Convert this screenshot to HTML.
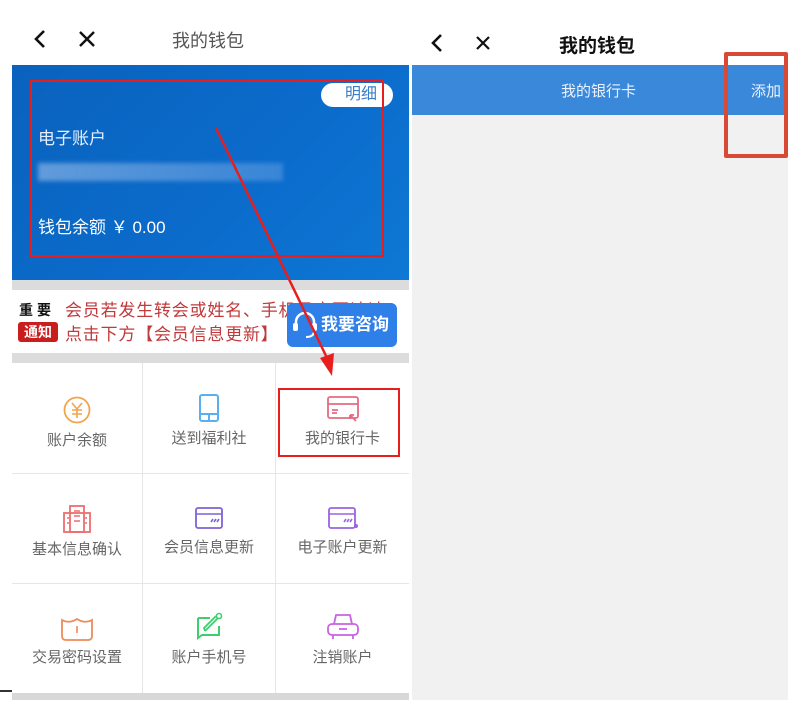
<!DOCTYPE html>
<html><head><meta charset="utf-8"><style>
*{margin:0;padding:0;box-sizing:border-box}
body{width:800px;height:711px;background:#fff;position:relative;overflow:hidden;font-family:"Liberation Sans","Noto Sans CJK SC",sans-serif}
.a{position:absolute}
.cell{position:absolute;background:#fff;text-align:center;color:#666;font-size:15px}
.cell svg{display:block;margin:0 auto 4px}
</style></head><body>
<svg class="a" style="left:30px;top:28px" width="80" height="22"><path d="M14 3 L6 11 L14 19" stroke="#111" stroke-width="2.6" fill="none"/><path d="M50 4 L64 18 M64 4 L50 18" stroke="#111" stroke-width="2.4"/></svg>
<div class="a" style="left:172px;top:27px;font-size:18px;color:#555">我的钱包</div>
<div class="a" style="left:12px;top:65px;width:397px;height:215px;background:linear-gradient(135deg,#0a62bd,#0b6ccc 60%,#0e78d4)"></div>
<div class="a" style="left:321px;top:83px;width:72px;height:24px;background:#fff;border-radius:12px;color:#3a7fc8;font-size:16px;text-align:right;padding-right:16px;line-height:24px">明细</div>
<div class="a" style="left:38px;top:124px;color:#e4efff;font-size:17px">电子账户</div>
<div class="a" style="left:38px;top:163px;width:245px;height:18px;background:linear-gradient(90deg,rgba(170,200,240,.55),rgba(140,180,235,.35));filter:blur(2px)"></div>
<div class="a" style="left:38px;top:213px;color:#fff;font-size:17px">钱包余额 ￥ 0.00</div>
<div class="a" style="left:30px;top:80px;width:354px;height:177px;border:2px solid #e81e1e"></div>
<div class="a" style="left:12px;top:280px;width:397px;height:10px;background:#dcdcdc"></div>
<div class="a" style="left:12px;top:353px;width:397px;height:10px;background:#dcdcdc"></div>
<div class="a" style="left:19px;top:300px;font-size:14px;font-weight:bold;color:#111;letter-spacing:4px">重要</div>
<div class="a" style="left:18px;top:322px;width:40px;height:20px;background:#c81e1e;border-radius:3px;color:#fff;font-size:14px;font-weight:bold;text-align:center;line-height:20px">通知</div>
<div class="a" style="left:65px;top:296px;font-size:17px;letter-spacing:0.8px;color:#c0393b;white-space:nowrap;width:340px;overflow:hidden">会员若发生转会或姓名、手机号变更请请</div>
<div class="a" style="left:65px;top:320px;font-size:17px;letter-spacing:0.8px;color:#c0393b">点击下方【会员信息更新】</div>
<div class="a" style="left:287px;top:303px;width:110px;height:44px;background:#2f7fe8;border-radius:6px;color:#fff;font-size:17px;font-weight:bold;line-height:44px;padding-left:34px">我要咨询</div>
<svg class="a" style="left:290px;top:309px" width="30" height="32"><path d="M6 18 V13 a9 9 0 0 1 18 0 V18" stroke="#fff" stroke-width="2.5" fill="none"/><rect x="3" y="14" width="5" height="8" rx="2" fill="#fff"/><rect x="22" y="14" width="5" height="8" rx="2" fill="#fff"/><path d="M24 22 q0 6 -8 6" stroke="#fff" stroke-width="2" fill="none"/></svg>
<div class="a" style="left:12px;top:363px;width:397px;height:330px;background:#e6e6e6"></div>
<div class="cell" style="left:12px;top:363px;width:130px;height:110px;padding-top:32px"><svg width="30" height="30"><circle cx="15" cy="15" r="12.5" stroke="#f0a54d" stroke-width="1.8" fill="none"/><path d="M10 8 L15 14 L20 8 M15 14 V23 M10 15 H20 M10 19 H20" stroke="#f0a54d" stroke-width="1.6" fill="none"/></svg>账户余额</div>
<div class="cell" style="left:143px;top:363px;width:132px;height:110px;padding-top:30px"><svg width="22" height="30"><rect x="2" y="2" width="18" height="26" rx="2" stroke="#5ab0ee" stroke-width="2" fill="none"/><path d="M2 21 H20 M11 21 V28" stroke="#5ab0ee" stroke-width="2"/></svg>送到福利社</div>
<div class="cell" style="left:276px;top:363px;width:133px;height:110px;padding-top:32px"><svg width="34" height="28"><rect x="2" y="2" width="30" height="21" rx="2" stroke="#e86a80" stroke-width="1.8" fill="none"/><path d="M2 9 H32 M6 15 H12 M6 18 H11" stroke="#e86a80" stroke-width="1.8"/><path d="M24 20 L30 26 M24 20 H28 M24 20 V24" stroke="#e86a80" stroke-width="1.8" fill="none"/></svg>我的银行卡</div>
<div class="cell" style="left:12px;top:474px;width:130px;height:109px;padding-top:30px"><svg width="30" height="30"><rect x="8" y="2" width="14" height="26" stroke="#ec6e6e" stroke-width="1.8" fill="none"/><rect x="2" y="9" width="26" height="19" stroke="#ec6e6e" stroke-width="1.8" fill="none"/><path d="M12 7 H18 M12 12 H18 M12 17 H18 M5 14 H7 M23 14 H25 M5 19 H7 M23 19 H25" stroke="#ec6e6e" stroke-width="1.6"/></svg>基本信息确认</div>
<div class="cell" style="left:143px;top:474px;width:132px;height:109px;padding-top:32px"><svg width="30" height="26"><rect x="2" y="2" width="26" height="20" rx="2" stroke="#7e62d8" stroke-width="1.8" fill="none"/><path d="M2 8 H28 M17 16 l2 -3 M20 16 l2 -3 M23 16 l2 -3" stroke="#7e62d8" stroke-width="1.6"/></svg>会员信息更新</div>
<div class="cell" style="left:276px;top:474px;width:133px;height:109px;padding-top:32px"><svg width="32" height="26"><rect x="2" y="2" width="26" height="20" rx="2" stroke="#9a64e0" stroke-width="1.8" fill="none"/><path d="M2 8 H28 M17 16 l2 -3 M20 16 l2 -3 M23 16 l2 -3" stroke="#9a64e0" stroke-width="1.6"/><circle cx="29" cy="20" r="2" fill="#9a64e0"/></svg>电子账户更新</div>
<div class="cell" style="left:12px;top:584px;width:130px;height:109px;padding-top:32px"><svg width="34" height="26"><path d="M2 4 Q9 8 17 3 Q25 8 32 4 V20 Q32 24 28 24 H6 Q2 24 2 20 Z" stroke="#ef8a5a" stroke-width="1.8" fill="none"/><path d="M17 10 V17" stroke="#ef8a5a" stroke-width="1.6"/></svg>交易密码设置</div>
<div class="cell" style="left:143px;top:584px;width:132px;height:109px;padding-top:28px"><svg width="28" height="30"><path d="M3 6 H15 M3 6 V26 L7 23 H24 V14" stroke="#3fce6e" stroke-width="2" fill="none"/><path d="M10 19 L23 6 M10 19 L9 16 L21 4" stroke="#3fce6e" stroke-width="1.8" fill="none"/><circle cx="24" cy="4" r="2.5" stroke="#3fce6e" stroke-width="1.6" fill="none"/></svg>账户手机号</div>
<div class="cell" style="left:276px;top:584px;width:133px;height:109px;padding-top:28px"><svg width="34" height="30"><path d="M8 12 L10 3 H24 L26 12" stroke="#c864e0" stroke-width="1.8" fill="none"/><rect x="2" y="12" width="30" height="11" rx="4" stroke="#c864e0" stroke-width="1.8" fill="none"/><path d="M7 23 V27 M27 23 V27 M13 17 H21" stroke="#c864e0" stroke-width="1.8"/></svg>注销账户</div>
<div class="a" style="left:12px;top:693px;width:397px;height:7px;background:#d8d8d8"></div>
<div class="a" style="left:0;top:690px;width:12px;height:2px;background:#333"></div>
<div class="a" style="left:278px;top:388px;width:122px;height:69px;border:2px solid #e81e1e"></div>
<div class="a" style="left:412px;top:65px;width:376px;height:635px;background:#f1f1f1"></div>
<div class="a" style="left:412px;top:65px;width:376px;height:50px;background:#3a88d9"></div>
<svg class="a" style="left:428px;top:32px" width="70" height="22"><path d="M13 3 L5 11 L13 19" stroke="#111" stroke-width="2.6" fill="none"/><path d="M49 5 L61 17 M61 5 L49 17" stroke="#111" stroke-width="2.2"/></svg>
<div class="a" style="left:559px;top:31px;font-size:19px;font-weight:bold;color:#111">我的钱包</div>
<div class="a" style="left:561px;top:80px;font-size:15px;color:#eaf2ff">我的银行卡</div>
<div class="a" style="left:751px;top:80px;font-size:15px;color:#eaf2ff">添加</div>
<div class="a" style="left:724px;top:52px;width:64px;height:106px;border:4px solid #d94a36;border-radius:2px"></div>
<svg class="a" style="left:0;top:0" width="800" height="711"><path d="M216 128 L328 360" stroke="#e81e1e" stroke-width="2.5"/><path d="M320 358 L332 376 L334 353 Z" fill="#e81e1e"/></svg>
</body></html>
